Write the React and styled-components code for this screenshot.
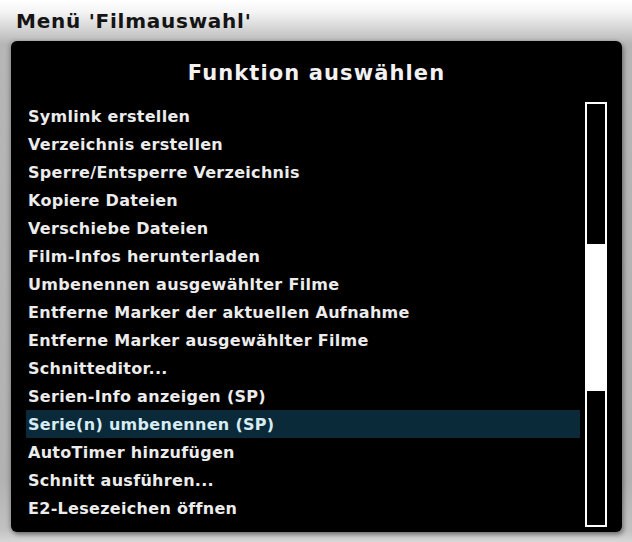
import React from "react";
import styled, { createGlobalStyle } from "styled-components";

const Global = createGlobalStyle`
  html, body { margin: 0; padding: 0; background: #b4b4b4; }
  body { font-family: "DejaVu Sans", "Liberation Sans", sans-serif; }
`;

const Screen = styled.div`
  width: 632px;
  height: 542px;
  box-sizing: border-box;
  overflow: hidden;
  background: linear-gradient(
    to bottom,
    #ffffff 0px,
    #f4f4f4 12px,
    #d2d2d2 30px,
    #b6b6b6 44px,
    #b2b2b2 480px,
    #c2c2c2 530px,
    #d6d6d6 542px
  );
  display: flex;
  flex-direction: column;
`;

const Title = styled.h1`
  margin: 0;
  height: 41px;
  box-sizing: border-box;
  padding: 9px 0 0 16px;
  font-size: 20px;
  font-weight: bold;
  color: #141414;
  line-height: 25px;
  letter-spacing: 0.75px;
`;

const Panel = styled.div`
  margin: 0 10px 0 11px;
  height: 491px;
  background: #000;
  border-radius: 6px;
  box-shadow: 2px 3px 4px rgba(0, 0, 0, 0.35), -2px 0 4px rgba(0, 0, 0, 0.2);
  display: flex;
  flex-direction: column;
`;

const Heading = styled.h2`
  margin: 0;
  height: 61px;
  box-sizing: border-box;
  padding-top: 19px;
  text-align: center;
  font-size: 21px;
  line-height: 26px;
  font-weight: bold;
  color: #f2f2f2;
  letter-spacing: 1.1px;
`;

const Body = styled.div`
  display: flex;
  padding: 0 15px 0 15px;
  gap: 5px;
`;

const List = styled.ul`
  list-style: none;
  margin: 0;
  padding: 0;
  flex: 1;
`;

const Item = styled.li`
  height: 28px;
  line-height: 29px;
  padding-left: 2px;
  font-size: 16px;
  font-weight: bold;
  letter-spacing: 0.3px;
  white-space: nowrap;
  color: ${(p) => (p.$active ? "#d8ecf4" : "#ececec")};
  background: ${(p) => (p.$active ? "#0b2a39" : "transparent")};
`;

const Scrollbar = styled.div`
  width: 22px;
  height: 425px;
  box-sizing: border-box;
  border: 2px solid #fff;
  position: relative;
`;

const Thumb = styled.div`
  position: absolute;
  left: 0;
  right: 0;
  background: #fff;
`;

const items = [
  "Symlink erstellen",
  "Verzeichnis erstellen",
  "Sperre/Entsperre Verzeichnis",
  "Kopiere Dateien",
  "Verschiebe Dateien",
  "Film-Infos herunterladen",
  "Umbenennen ausgewählter Filme",
  "Entferne Marker der aktuellen Aufnahme",
  "Entferne Marker ausgewählter Filme",
  "Schnitteditor...",
  "Serien-Info anzeigen (SP)",
  "Serie(n) umbenennen (SP)",
  "AutoTimer hinzufügen",
  "Schnitt ausführen...",
  "E2-Lesezeichen öffnen",
];

export default function App() {
  return (
    <>
      <Global />
      <Screen>
        <Title>Menü 'Filmauswahl'</Title>
        <Panel>
          <Heading>Funktion auswählen</Heading>
          <Body>
            <List>
              {items.map((t, i) => (
                <Item key={t} $active={i === 11}>
                  {t}
                </Item>
              ))}
            </List>
            <Scrollbar>
              <Thumb style={{ top: 140, height: 147 }} />
            </Scrollbar>
          </Body>
        </Panel>
      </Screen>
    </>
  );
}
